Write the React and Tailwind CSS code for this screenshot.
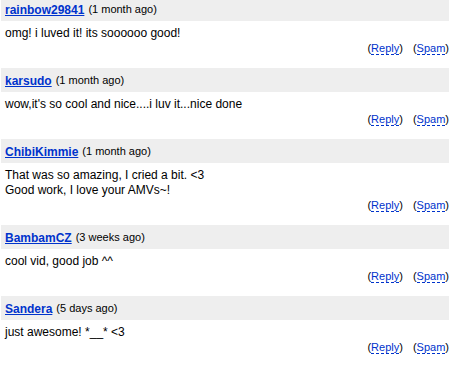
import React from 'react';

const comments = [
  { user: 'rainbow29841', when: '1 month ago', lines: ['omg! i luved it! its soooooo good!'] },
  { user: 'karsudo', when: '1 month ago', lines: ["wow,it's so cool and nice....i luv it...nice done"] },
  { user: 'ChibiKimmie', when: '1 month ago', lines: ['That was so amazing, I cried a bit. <3', 'Good work, I love your AMVs~!'] },
  { user: 'BambamCZ', when: '3 weeks ago', lines: ['cool vid, good job ^^'] },
  { user: 'Sandera', when: '5 days ago', lines: ['just awesome! *__* <3'] },
];

function Comment({ c }) {
  return (
    <div className="pb-[12px]">
      {/* Header */}
      <div className="ml-[1px] h-[24px] bg-[#eeeeee] flex items-center pl-[4px] pt-[1px]">
        <a href="#" className="text-[12px] font-bold text-[#0033cc] underline leading-none">{c.user}</a>
        <span className="text-[11px] text-black ml-[4px] leading-none">({c.when})</span>
      </div>

      {/* Body */}
      <div className="pt-[5px] pl-[5px] text-[12px] leading-[15px] text-black">
        {c.lines.map((l, i) => <div key={i}>{l}</div>)}
      </div>

      {/* Actions */}
      <div className="flex justify-end gap-[10px] text-[11px] leading-[15px] text-black">
        <span>(<a href="#" className="text-[#0033cc] border-b border-dashed border-[#0033cc]">Reply</a>)</span>
        <span>(<a href="#" className="text-[#0033cc] border-b border-dashed border-[#0033cc]">Spam</a>)</span>
      </div>
    </div>
  );
}

export default function App() {
  return (
    <div className="w-[449px] h-[368px] overflow-hidden bg-white" style={{ fontFamily: '"Liberation Sans", Arial, sans-serif' }}>
      <div className="-mt-[3px]">
        {comments.map((c) => <Comment key={c.user} c={c} />)}
      </div>
    </div>
  );
}
